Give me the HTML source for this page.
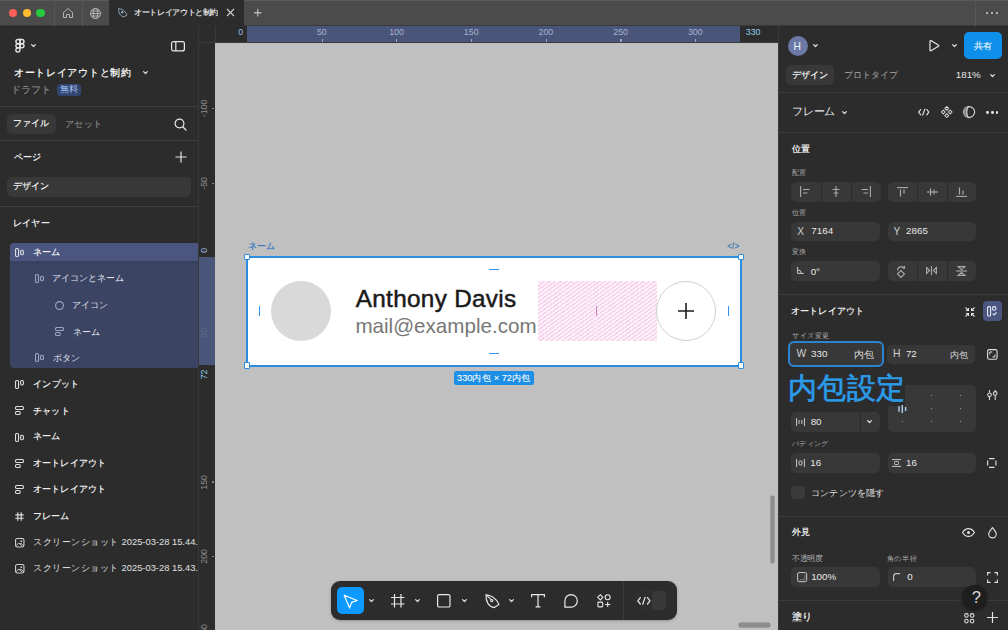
<!DOCTYPE html>
<html><head><meta charset="utf-8">
<style>
*{box-sizing:border-box;margin:0;padding:0}
html,body{width:1008px;height:630px;overflow:hidden;background:#2c2c2c;font-family:"Liberation Sans",sans-serif;color:#e8e8e8}
.a{position:absolute}
svg{position:absolute;overflow:visible}
.t{position:absolute;white-space:nowrap;line-height:1}
</style></head><body>
<div class="a" style="left:0px;top:0px;width:1008px;height:26px;background:#4b4b4b;"></div>
<div class="a" style="left:0px;top:0px;width:1008px;height:1px;background:#5a5a5a;"></div>
<div class="a" style="left:0px;top:25px;width:1008px;height:1px;background:#3a3a3a;"></div>
<div class="a" style="left:8.8px;top:8.8px;width:8.4px;height:8.4px;border-radius:50%;background:#fe5f57"></div>
<div class="a" style="left:22.5px;top:8.8px;width:8.4px;height:8.4px;border-radius:50%;background:#febc2e"></div>
<div class="a" style="left:36.199999999999996px;top:8.8px;width:8.4px;height:8.4px;border-radius:50%;background:#28c840"></div>
<div class="a" style="left:54px;top:0px;width:1px;height:26px;background:#575757;"></div>
<div class="a" style="left:82px;top:0px;width:1px;height:26px;background:#575757;"></div>
<div class="a" style="left:109px;top:0px;width:135px;height:26px;background:#2c2c2c;"></div>
<svg style="left:62px;top:7px" width="12" height="12" viewBox="0 0 12 12"><path d="M1.5 5.5L6 1.5l4.5 4V10.5H7.5V7.5h-3v3H1.5z" fill="none" stroke="#b8b8b8" stroke-width="0.95" stroke-linejoin="round"/></svg>
<svg style="left:89px;top:7px" width="13" height="13" viewBox="0 0 13 13"><g fill="none" stroke="#b8b8b8" stroke-width="0.95"><circle cx="6.5" cy="6.5" r="5"/><ellipse cx="6.5" cy="6.5" rx="2.2" ry="5"/><path d="M1.5 6.5h10M2.3 4h8.4M2.3 9h8.4"/></g></svg>
<svg style="left:118.3px;top:8.4px" width="9.6" height="9.6" viewBox="0 0 15 14.5"><g fill="none" stroke="#a9c3dc" stroke-width="1.2" stroke-linejoin="round"><path d="M1 0.7C5 0.9 11.5 3.8 14 10.5L9.3 13.6C4 12.8 0.6 8 1 0.7z"/><circle cx="6.6" cy="6.4" r="1.3" fill="#a9c3dc"/></g></svg>
<div class="t" style="left:133.51px;top:8.76px;font-size:40.00px;font-weight:bold;color:#e6e6e6;font-family:'Liberation Sans',sans-serif;;transform:scale(0.1872);transform-origin:0 0;">オートレイアウトと制約</div>
<svg style="left:226px;top:8px" width="9" height="9" viewBox="0 0 9 9"><path d="M1 1l7 7M8 1L1 8" stroke="#cfcfcf" stroke-width="1.1"/></svg>
<svg style="left:254px;top:9.2px" width="7.5" height="7.5" viewBox="0 0 7.5 7.5"><path d="M3.75 0v7.5M0 3.75h7.5" stroke="#b4b4b4" stroke-width="1.3"/></svg>
<div class="a" style="left:986px;top:12px;width:2.2px;height:2.2px;border-radius:50%;background:#d0d0d0"></div>
<div class="a" style="left:991px;top:12px;width:2.2px;height:2.2px;border-radius:50%;background:#d0d0d0"></div>
<div class="a" style="left:996px;top:12px;width:2.2px;height:2.2px;border-radius:50%;background:#d0d0d0"></div>
<div class="a" style="left:975px;top:0px;width:1px;height:26px;background:#575757;"></div>
<div class="a" style="left:0px;top:26px;width:198px;height:604px;background:#2c2c2c;"></div>
<div class="a" style="left:198px;top:26px;width:1px;height:604px;background:#383838;"></div>
<div class="a" style="left:0px;top:106px;width:198px;height:1px;background:#3d3d3d;"></div>
<div class="a" style="left:0px;top:140px;width:198px;height:1px;background:#3d3d3d;"></div>
<div class="a" style="left:0px;top:206px;width:198px;height:1px;background:#3d3d3d;"></div>
<svg style="left:0px;top:0px" width="40" height="60" viewBox="0 0 40 60"><g fill="none" stroke="#e8e8e8" stroke-width="1.35"><path d="M19.95 39.5H18a2.1 2.1 0 0 0 0 4.2h1.95z"/><path d="M19.95 39.5h1.95a2.1 2.1 0 0 1 0 4.2h-1.95z"/><path d="M19.95 43.7H18a2.1 2.1 0 0 0 0 4.2h1.95z"/><circle cx="21.9" cy="45.8" r="2.1"/><path d="M19.95 47.9V50a2.05 2.1 0 1 1-2.05-2.1z"/></g></svg>
<svg style="left:30.5px;top:44.0px" width="5" height="3" viewBox="0 0 5 3"><path d="M0.6 0.6l1.9 1.9 1.9-1.9" fill="none" stroke="#d8d8d8" stroke-width="1.3" stroke-linecap="round" stroke-linejoin="round"/></svg>
<svg style="left:171px;top:40.5px" width="14" height="10.5" viewBox="0 0 14 10.5"><rect x="0.6" y="0.6" width="12.8" height="9.3" rx="2" fill="none" stroke="#e8e8e8" stroke-width="1.2"/><path d="M4.8 0.8v9" stroke="#e8e8e8" stroke-width="1.2"/></svg>
<div class="t" style="left:14.04px;top:66.71px;font-size:40.00px;font-weight:bold;color:#f0f0f0;font-family:'Liberation Sans',sans-serif;;transform:scale(0.2622);transform-origin:0 0;">オートレイアウトと制約</div>
<svg style="left:143.3px;top:70.5px" width="5" height="3" viewBox="0 0 5 3"><path d="M0.6 0.6l1.9 1.9 1.9-1.9" fill="none" stroke="#d8d8d8" stroke-width="1.3" stroke-linecap="round" stroke-linejoin="round"/></svg>
<div class="t" style="left:10.87px;top:85.23px;font-size:40.00px;font-weight:normal;color:#9a9a9a;font-family:'Liberation Sans',sans-serif;;transform:scale(0.2450);transform-origin:0 0;">ドラフト</div>
<div class="a" style="left:56.5px;top:83.6px;width:24px;height:12px;background:#33456f;border-radius:3.5px"></div>
<div class="t" style="left:59.69px;top:85.46px;font-size:40.00px;font-weight:normal;color:#a3c2f5;font-family:'Liberation Sans',sans-serif;;transform:scale(0.2141);transform-origin:0 0;">無料</div>
<div class="a" style="left:7px;top:114px;width:49px;height:20px;background:#383838;border-radius:5px"></div>
<div class="t" style="left:12.94px;top:118.74px;font-size:40.00px;font-weight:bold;color:#eeeeee;font-family:'Liberation Sans',sans-serif;;transform:scale(0.2186);transform-origin:0 0;">ファイル</div>
<div class="t" style="left:65.08px;top:118.50px;font-size:40.00px;font-weight:normal;color:#9a9a9a;font-family:'Liberation Sans',sans-serif;;transform:scale(0.2293);transform-origin:0 0;">アセット</div>
<svg style="left:174px;top:117.5px" width="13" height="13" viewBox="0 0 13 13"><circle cx="5.5" cy="5.5" r="4.4" fill="none" stroke="#e8e8e8" stroke-width="1.2"/><path d="M8.7 8.7l3.3 3.3" stroke="#e8e8e8" stroke-width="1.3" stroke-linecap="round"/></svg>
<div class="t" style="left:13.60px;top:151.80px;font-size:40.00px;font-weight:bold;color:#eeeeee;font-family:'Liberation Sans',sans-serif;;transform:scale(0.2252);transform-origin:0 0;">ページ</div>
<svg style="left:175px;top:151px" width="12" height="12" viewBox="0 0 12 12"><path d="M6 0.5v11M0.5 6h11" stroke="#e8e8e8" stroke-width="1.2"/></svg>
<div class="a" style="left:6.5px;top:177px;width:184px;height:20px;background:#383838;border-radius:5px"></div>
<div class="t" style="left:13.38px;top:182.21px;font-size:40.00px;font-weight:bold;color:#eeeeee;font-family:'Liberation Sans',sans-serif;;transform:scale(0.2188);transform-origin:0 0;">デザイン</div>
<div class="t" style="left:13.18px;top:218.07px;font-size:40.00px;font-weight:bold;color:#eeeeee;font-family:'Liberation Sans',sans-serif;;transform:scale(0.2239);transform-origin:0 0;">レイヤー</div>
<div class="a" style="left:10px;top:243.4px;width:188px;height:124.4px;background:#3b4462;border-radius:4px 0 0 4px"></div>
<div class="a" style="left:10px;top:243.4px;width:188px;height:18px;background:#4a5680;border-radius:4px 0 0 0"></div>
<div class="a" style="left:10px;top:261.4px;width:188px;height:3px;background:#384160;"></div>
<svg style="left:15.2px;top:247.9px" width="9.5" height="9.5" viewBox="0 0 9.5 9.5"><rect x="0.55" y="0.55" width="3" height="7.9" rx="1.1" fill="none" stroke="#e0e0e0" stroke-width="1.1"/><rect x="5.6" y="2.3" width="2.8" height="4.4" rx="1.1" fill="none" stroke="#e0e0e0" stroke-width="1.1"/></svg>
<div class="t" style="left:33.28px;top:247.70px;font-size:40.00px;font-weight:bold;color:#f2f2f2;font-family:'Liberation Sans',sans-serif;;transform:scale(0.2161);transform-origin:0 0;">ネーム</div>
<svg style="left:35.0px;top:274.3px" width="9.5" height="9.5" viewBox="0 0 9.5 9.5"><rect x="0.55" y="0.55" width="3" height="7.9" rx="1.1" fill="none" stroke="#9ea6c2" stroke-width="1.1"/><rect x="5.6" y="2.3" width="2.8" height="4.4" rx="1.1" fill="none" stroke="#9ea6c2" stroke-width="1.1"/></svg>
<div class="t" style="left:52.42px;top:273.96px;font-size:40.00px;font-weight:normal;color:#e3e6f0;font-family:'Liberation Sans',sans-serif;;transform:scale(0.2201);transform-origin:0 0;">アイコンとネーム</div>
<svg style="left:54.8px;top:301.1px" width="9.5" height="9.5" viewBox="0 0 9.5 9.5"><circle cx="4.5" cy="4.5" r="3.9" fill="none" stroke="#9ea6c2" stroke-width="1.1"/></svg>
<div class="t" style="left:72.23px;top:300.82px;font-size:40.00px;font-weight:normal;color:#e3e6f0;font-family:'Liberation Sans',sans-serif;;transform:scale(0.2173);transform-origin:0 0;">アイコン</div>
<svg style="left:54.8px;top:327.1px" width="9.5" height="9.5" viewBox="0 0 9.5 9.5"><rect x="0.55" y="0.55" width="7.9" height="3" rx="1.1" fill="none" stroke="#9ea6c2" stroke-width="1.1"/><rect x="0.55" y="5.5" width="4.6" height="3" rx="1.1" fill="none" stroke="#9ea6c2" stroke-width="1.1"/></svg>
<div class="t" style="left:72.66px;top:326.73px;font-size:40.00px;font-weight:normal;color:#e3e6f0;font-family:'Liberation Sans',sans-serif;;transform:scale(0.2216);transform-origin:0 0;">ネーム</div>
<svg style="left:35.0px;top:353.0px" width="9.5" height="9.5" viewBox="0 0 9.5 9.5"><rect x="0.55" y="0.55" width="3" height="7.9" rx="1.1" fill="none" stroke="#9ea6c2" stroke-width="1.1"/><rect x="5.6" y="2.3" width="2.8" height="4.4" rx="1.1" fill="none" stroke="#9ea6c2" stroke-width="1.1"/></svg>
<div class="t" style="left:53.08px;top:352.71px;font-size:40.00px;font-weight:normal;color:#e3e6f0;font-family:'Liberation Sans',sans-serif;;transform:scale(0.2229);transform-origin:0 0;">ボタン</div>
<svg style="left:15.2px;top:379.5px" width="9.5" height="9.5" viewBox="0 0 9.5 9.5"><rect x="0.55" y="0.55" width="3" height="7.9" rx="1.1" fill="none" stroke="#e0e0e0" stroke-width="1.1"/><rect x="5.6" y="0.55" width="2.8" height="4.4" rx="1.1" fill="none" stroke="#e0e0e0" stroke-width="1.1"/></svg>
<div class="t" style="left:33.05px;top:379.46px;font-size:40.00px;font-weight:bold;color:#eeeeee;font-family:'Liberation Sans',sans-serif;;transform:scale(0.2268);transform-origin:0 0;">インプット</div>
<svg style="left:15.2px;top:406.0px" width="9.5" height="9.5" viewBox="0 0 9.5 9.5"><rect x="0.55" y="0.55" width="7.9" height="3" rx="1.1" fill="none" stroke="#e0e0e0" stroke-width="1.1"/><rect x="0.55" y="5.5" width="4.6" height="3" rx="1.1" fill="none" stroke="#e0e0e0" stroke-width="1.1"/></svg>
<div class="t" style="left:33.28px;top:405.57px;font-size:40.00px;font-weight:bold;color:#eeeeee;font-family:'Liberation Sans',sans-serif;;transform:scale(0.2240);transform-origin:0 0;">チャット</div>
<svg style="left:15.2px;top:432.5px" width="9.5" height="9.5" viewBox="0 0 9.5 9.5"><rect x="0.55" y="0.55" width="3" height="7.9" rx="1.1" fill="none" stroke="#e0e0e0" stroke-width="1.1"/><rect x="5.6" y="2.3" width="2.8" height="4.4" rx="1.1" fill="none" stroke="#e0e0e0" stroke-width="1.1"/></svg>
<div class="t" style="left:33.28px;top:432.25px;font-size:40.00px;font-weight:bold;color:#eeeeee;font-family:'Liberation Sans',sans-serif;;transform:scale(0.2161);transform-origin:0 0;">ネーム</div>
<svg style="left:15.2px;top:458.5px" width="9.5" height="9.5" viewBox="0 0 9.5 9.5"><rect x="0.55" y="0.55" width="7.9" height="3" rx="1.1" fill="none" stroke="#e0e0e0" stroke-width="1.1"/><rect x="0.55" y="5.5" width="4.6" height="3" rx="1.1" fill="none" stroke="#e0e0e0" stroke-width="1.1"/></svg>
<div class="t" style="left:33.28px;top:458.06px;font-size:40.00px;font-weight:bold;color:#eeeeee;font-family:'Liberation Sans',sans-serif;;transform:scale(0.2246);transform-origin:0 0;">オートレイアウト</div>
<svg style="left:15.2px;top:484.9px" width="9.5" height="9.5" viewBox="0 0 9.5 9.5"><rect x="0.55" y="0.55" width="7.9" height="3" rx="1.1" fill="none" stroke="#e0e0e0" stroke-width="1.1"/><rect x="0.55" y="5.5" width="4.6" height="3" rx="1.1" fill="none" stroke="#e0e0e0" stroke-width="1.1"/></svg>
<div class="t" style="left:33.28px;top:484.46px;font-size:40.00px;font-weight:bold;color:#eeeeee;font-family:'Liberation Sans',sans-serif;;transform:scale(0.2246);transform-origin:0 0;">オートレイアウト</div>
<svg style="left:15.2px;top:511.5px" width="9.5" height="9.5" viewBox="0 0 9.5 9.5"><path d="M2.8 0.3v8.4M6.2 0.3v8.4M0.3 2.8h8.4M0.3 6.2h8.4" stroke="#e0e0e0" stroke-width="1.15" fill="none"/></svg>
<div class="t" style="left:32.83px;top:511.10px;font-size:40.00px;font-weight:bold;color:#eeeeee;font-family:'Liberation Sans',sans-serif;;transform:scale(0.2229);transform-origin:0 0;">フレーム</div>
<svg style="left:15.2px;top:538.0px" width="9.5" height="9.5" viewBox="0 0 9.5 9.5"><rect x="0.55" y="0.55" width="8.4" height="8.4" rx="1.6" fill="none" stroke="#d0d0d0" stroke-width="1.1"/><path d="M0.9 7.8l2.9-2.9 3 3M5 6.2l1-1 2.8 2.8" fill="none" stroke="#d0d0d0" stroke-width="1"/><circle cx="6.3" cy="3.2" r="0.9" fill="#d0d0d0"/></svg>
<div class="t" style="left:32.80px;top:537.36px;font-size:40.00px;font-weight:normal;color:#e0e0e0;font-family:'Liberation Sans',sans-serif;;transform:scale(0.2336);transform-origin:0 0;">スクリーンショット 2025-03-28 15.44.</div>
<svg style="left:15.2px;top:564.0px" width="9.5" height="9.5" viewBox="0 0 9.5 9.5"><rect x="0.55" y="0.55" width="8.4" height="8.4" rx="1.6" fill="none" stroke="#d0d0d0" stroke-width="1.1"/><path d="M0.9 7.8l2.9-2.9 3 3M5 6.2l1-1 2.8 2.8" fill="none" stroke="#d0d0d0" stroke-width="1"/><circle cx="6.3" cy="3.2" r="0.9" fill="#d0d0d0"/></svg>
<div class="t" style="left:32.80px;top:563.36px;font-size:40.00px;font-weight:normal;color:#e0e0e0;font-family:'Liberation Sans',sans-serif;;transform:scale(0.2336);transform-origin:0 0;">スクリーンショット 2025-03-28 15.43.</div>
<div class="a" style="left:199px;top:26px;width:579px;height:17px;background:#2c2c2c;"></div>
<div class="a" style="left:199px;top:26px;width:16px;height:604px;background:#2c2c2c;"></div>
<div class="a" style="left:247.3px;top:26px;width:493px;height:16.5px;background:#4a5679;"></div>
<div class="a" style="left:199px;top:257px;width:16px;height:108px;background:#4a5679;"></div>
<div class="a" style="left:321.5px;top:38.9px;width:1.3px;height:3.2px;background:#9aa6c4;"></div>
<div class="t" style="left:301.80px;top:27.50px;width:40px;height:8.8px;text-align:center;font-size:8.8px;color:#a7b2cf">50</div>
<div class="a" style="left:396.2px;top:38.9px;width:1.3px;height:3.2px;background:#9aa6c4;"></div>
<div class="t" style="left:376.50px;top:27.50px;width:40px;height:8.8px;text-align:center;font-size:8.8px;color:#a7b2cf">100</div>
<div class="a" style="left:470.9px;top:38.9px;width:1.3px;height:3.2px;background:#9aa6c4;"></div>
<div class="t" style="left:451.20px;top:27.50px;width:40px;height:8.8px;text-align:center;font-size:8.8px;color:#a7b2cf">150</div>
<div class="a" style="left:545.6px;top:38.9px;width:1.3px;height:3.2px;background:#9aa6c4;"></div>
<div class="t" style="left:525.90px;top:27.50px;width:40px;height:8.8px;text-align:center;font-size:8.8px;color:#a7b2cf">200</div>
<div class="a" style="left:620.3px;top:38.9px;width:1.3px;height:3.2px;background:#9aa6c4;"></div>
<div class="t" style="left:600.60px;top:27.50px;width:40px;height:8.8px;text-align:center;font-size:8.8px;color:#a7b2cf">250</div>
<div class="a" style="left:695.0px;top:38.9px;width:1.3px;height:3.2px;background:#9aa6c4;"></div>
<div class="t" style="left:675.30px;top:27.50px;width:40px;height:8.8px;text-align:center;font-size:8.8px;color:#a7b2cf">300</div>
<div class="t" style="left:220.60px;top:27.50px;width:40px;height:8.8px;text-align:center;font-size:8.8px;color:#9bbbe6">0</div>
<div class="t" style="left:733.10px;top:27.50px;width:40px;height:8.8px;text-align:center;font-size:8.8px;color:#8fd0ec">330</div>
<div class="a" style="left:199px;top:42px;width:579px;height:1px;background:#3a3a3a;"></div>
<div class="a" style="left:214.5px;top:26px;width:1px;height:17px;background:#3a3a3a;"></div>
<div class="a" style="left:211.5px;top:107.8px;width:2.5px;height:1.3px;background:#8a8a8a;"></div>
<div class="t" style="left:189.20px;top:104.00px;width:30px;height:8.8px;text-align:center;font-size:8.8px;color:#8f8f8f;transform:rotate(-90deg)">-100</div>
<div class="a" style="left:211.5px;top:182.5px;width:2.5px;height:1.3px;background:#8a8a8a;"></div>
<div class="t" style="left:189.20px;top:178.70px;width:30px;height:8.8px;text-align:center;font-size:8.8px;color:#8f8f8f;transform:rotate(-90deg)">-50</div>
<div class="a" style="left:211.5px;top:481.3px;width:2.5px;height:1.3px;background:#8a8a8a;"></div>
<div class="t" style="left:189.20px;top:477.50px;width:30px;height:8.8px;text-align:center;font-size:8.8px;color:#8f8f8f;transform:rotate(-90deg)">150</div>
<div class="a" style="left:211.5px;top:556.0px;width:2.5px;height:1.3px;background:#8a8a8a;"></div>
<div class="t" style="left:189.20px;top:552.20px;width:30px;height:8.8px;text-align:center;font-size:8.8px;color:#8f8f8f;transform:rotate(-90deg)">200</div>
<div class="a" style="left:211.5px;top:630.7px;width:2.5px;height:1.3px;background:#8a8a8a;"></div>
<div class="t" style="left:189.20px;top:626.90px;width:30px;height:8.8px;text-align:center;font-size:8.8px;color:#8f8f8f;transform:rotate(-90deg)">250</div>
<div class="t" style="left:189.20px;top:246.10px;width:30px;height:8.8px;text-align:center;font-size:8.8px;color:#9bbbe6;transform:rotate(-90deg)">0</div>
<div class="t" style="left:189.20px;top:370.00px;width:30px;height:8.8px;text-align:center;font-size:8.8px;color:#8fd0ec;transform:rotate(-90deg)">72</div>
<div class="t" style="left:189.20px;top:328.10px;width:30px;height:8.8px;text-align:center;font-size:8.8px;color:#5d6a8a;transform:rotate(-90deg)">50</div>
<div class="a" style="left:215px;top:43px;width:563px;height:587px;background:#c0c0c0;"></div>
<div class="a" style="left:248px;top:258px;width:492px;height:107px;background:#ffffff;"></div>
<div class="a" style="left:271.4px;top:281px;width:60px;height:60px;border-radius:50%;background:#d9d9d9"></div>
<div class="t" style="left:355.80px;top:286.83px;font-size:24.30px;font-weight:normal;color:#1a1a1a;font-family:'Liberation Sans',sans-serif;letter-spacing:0.0125em;-webkit-text-stroke:0.5px #1a1a1a">Anthony Davis</div>
<div class="t" style="left:355.43px;top:316.26px;font-size:20.60px;font-weight:normal;color:#777777;font-family:'Liberation Sans',sans-serif;">mail@example.com</div>
<div class="a" style="left:537.5px;top:281.4px;width:119px;height:59.3px;background:repeating-linear-gradient(144deg,rgba(236,165,215,0.4) 0 1.5px,rgba(255,255,255,0) 1.5px 3.25px),#fdf1fa"></div>
<div class="a" style="left:596px;top:306.3px;width:1.3px;height:9.5px;background:#d27cc0;"></div>
<div class="a" style="left:656.3px;top:281.4px;width:60px;height:60px;border-radius:50%;background:#fff;border:1px solid #d0d0d0"></div>
<svg style="left:677px;top:302px" width="18" height="18" viewBox="0 0 18 18"><path d="M9 1v16M1 9h16" stroke="#1e1e1e" stroke-width="1.6"/></svg>
<div class="a" style="left:259.3px;top:306px;width:1px;height:10px;background:#2e90e6;"></div>
<div class="a" style="left:728px;top:306px;width:1px;height:10px;background:#2e90e6;"></div>
<div class="a" style="left:489px;top:268.6px;width:10px;height:1px;background:#2e90e6;"></div>
<div class="a" style="left:489px;top:352.6px;width:10px;height:1px;background:#2e90e6;"></div>
<div class="a" style="left:246px;top:256px;width:496px;height:110.5px;border:2px solid #2a8de0"></div>
<div class="a" style="left:243.7px;top:253.7px;width:6.6px;height:6.6px;background:#fff;border:1px solid #2a8de0;border-radius:1px"></div>
<div class="a" style="left:737.7px;top:253.7px;width:6.6px;height:6.6px;background:#fff;border:1px solid #2a8de0;border-radius:1px"></div>
<div class="a" style="left:243.7px;top:362.0px;width:6.6px;height:6.6px;background:#fff;border:1px solid #2a8de0;border-radius:1px"></div>
<div class="a" style="left:737.7px;top:362.0px;width:6.6px;height:6.6px;background:#fff;border:1px solid #2a8de0;border-radius:1px"></div>
<div class="t" style="left:247.88px;top:240.82px;font-size:40.00px;font-weight:bold;color:#3b7cc4;font-family:'Liberation Sans',sans-serif;;transform:scale(0.2220);transform-origin:0 0;">ネーム</div>
<div class="t" style="left:727.32px;top:243.48px;font-size:8.21px;font-weight:bold;color:#4a7fb0;font-family:'Liberation Sans',sans-serif;">&lt;/&gt;</div>
<div class="a" style="left:453.9px;top:371.2px;width:80px;height:13.6px;background:#1d8fe6;border-radius:2.5px"></div>
<div class="t" style="left:456.94px;top:373.41px;font-size:40.00px;font-weight:normal;color:#ffffff;font-family:'Liberation Sans',sans-serif;-webkit-text-stroke:0.25px #fff;transform:scale(0.2322);transform-origin:0 0;">330内包 × 72内包</div>
<div class="a" style="left:770.7px;top:495.5px;width:3.6px;height:67.4px;background:#8e8e8e;border-radius:2px;box-shadow:0 0 0 0.5px #7a7a7a"></div>
<div class="a" style="left:738.6px;top:623px;width:31px;height:3.6px;background:#8e8e8e;border-radius:2px;box-shadow:0 0 0 0.5px #7a7a7a"></div>
<div class="a" style="left:331px;top:580.7px;width:346px;height:39px;background:#2c2c2c;border-radius:9px;box-shadow:0 1px 3px rgba(0,0,0,0.25)"></div>
<div class="a" style="left:337.3px;top:587.1px;width:26.8px;height:26.6px;background:#0d99ff;border-radius:5px"></div>
<svg style="left:343px;top:593.5px" width="16" height="15" viewBox="0 0 16 15"><path d="M1.2 1.2l13 5.3-5.6 1.9-2 5.6z" fill="none" stroke="#fff" stroke-width="1.2" stroke-linejoin="round"/></svg>
<svg style="left:368.75px;top:599.4px" width="5" height="3" viewBox="0 0 5 3"><path d="M0.6 0.6l1.9 1.9 1.9-1.9" fill="none" stroke="#d8d8d8" stroke-width="1.3" stroke-linecap="round" stroke-linejoin="round"/></svg>
<svg style="left:415.4px;top:599.4px" width="5" height="3" viewBox="0 0 5 3"><path d="M0.6 0.6l1.9 1.9 1.9-1.9" fill="none" stroke="#d8d8d8" stroke-width="1.3" stroke-linecap="round" stroke-linejoin="round"/></svg>
<svg style="left:462.1px;top:599.4px" width="5" height="3" viewBox="0 0 5 3"><path d="M0.6 0.6l1.9 1.9 1.9-1.9" fill="none" stroke="#d8d8d8" stroke-width="1.3" stroke-linecap="round" stroke-linejoin="round"/></svg>
<svg style="left:509.2px;top:599.4px" width="5" height="3" viewBox="0 0 5 3"><path d="M0.6 0.6l1.9 1.9 1.9-1.9" fill="none" stroke="#d8d8d8" stroke-width="1.3" stroke-linecap="round" stroke-linejoin="round"/></svg>
<svg style="left:391px;top:593.7px" width="13.5" height="13.5" viewBox="0 0 13.5 13.5"><path d="M3.5 0v13.5M10 0v13.5M0 3.5h13.5M0 10h13.5" stroke="#e8e8e8" stroke-width="1.2" fill="none"/></svg>
<svg style="left:437.3px;top:594px" width="13.6" height="13.6" viewBox="0 0 13.6 13.6"><rect x="0.6" y="0.6" width="12.4" height="12.4" rx="1.6" fill="none" stroke="#e8e8e8" stroke-width="1.2"/></svg>
<svg style="left:484.6px;top:593.8px" width="14.6" height="14.2" viewBox="0 0 14.6 14.2"><g fill="none" stroke="#e8e8e8" stroke-width="1.15" stroke-linejoin="round"><path d="M1 0.7C5 0.9 11.5 3.8 14 10.5L9.3 13.6C4 12.8 0.6 8 1 0.7z"/><circle cx="6.8" cy="6.6" r="1.1"/><path d="M1.2 0.9l4.8 4.8"/></g></svg>
<svg style="left:531px;top:594px" width="14" height="13.5" viewBox="0 0 14 13.5"><path d="M0.6 3.2V0.6h12.8v2.6M7 0.6v12.3M4.6 12.9h4.8" fill="none" stroke="#e8e8e8" stroke-width="1.2"/></svg>
<svg style="left:564px;top:594px" width="14" height="13.5" viewBox="0 0 14 13.5"><path d="M7 0.6a6.3 6.3 0 1 1 0 12.6H0.9V7A6.2 6.2 0 0 1 7 0.6z" fill="none" stroke="#e8e8e8" stroke-width="1.2" stroke-linejoin="round"/></svg>
<svg style="left:596.7px;top:594px" width="14.2" height="13.6" viewBox="0 0 14.2 13.6"><g fill="none" stroke="#e8e8e8" stroke-width="1.1"><path d="M3.3 0.7l2.6 2.6-2.6 2.6L0.7 3.3z"/><circle cx="10.7" cy="3.3" r="2.5"/><rect x="0.9" y="8.1" width="4.8" height="4.8" rx="0.9"/><path d="M10.7 7.9v5.2M8.1 10.5h5.2"/></g></svg>
<div class="a" style="left:623.4px;top:581px;width:1px;height:39px;background:#3a3a3a;"></div>
<div class="a" style="left:636.3px;top:590.7px;width:30.1px;height:19.6px;background:#2d2d2d;border-radius:5px;box-shadow:0 0 0 0.5px #343434"></div>
<div class="a" style="left:652px;top:591px;width:14.4px;height:19px;background:#393939;border-radius:4px"></div>
<svg style="left:637.2px;top:596.6px" width="13.8" height="7.6" viewBox="0 0 13.8 7.6"><path d="M3.3 0.6L0.8 3.8l2.5 3.2M10.5 0.6l2.5 3.2-2.5 3.2M8.1 0.4L5.7 7.2" fill="none" stroke="#e6e6e6" stroke-width="1.25" stroke-linecap="round" stroke-linejoin="round"/></svg>
<div class="a" style="left:778px;top:26px;width:230px;height:604px;background:#2c2c2c;"></div>
<div class="a" style="left:778px;top:26px;width:1px;height:604px;background:#383838;"></div>
<div class="a" style="left:779px;top:91.5px;width:229px;height:1px;background:#3a3a3a;"></div>
<div class="a" style="left:779px;top:132px;width:229px;height:1px;background:#3a3a3a;"></div>
<div class="a" style="left:779px;top:294px;width:229px;height:1px;background:#3a3a3a;"></div>
<div class="a" style="left:779px;top:515.5px;width:229px;height:1px;background:#3a3a3a;"></div>
<div class="a" style="left:779px;top:600px;width:229px;height:1px;background:#3a3a3a;"></div>
<div class="a" style="left:787.6px;top:35.8px;width:20px;height:20px;border-radius:50%;background:#6a79a6"></div>
<div class="t" style="left:793.54px;top:42.34px;font-size:10.30px;font-weight:normal;color:#f4f4f8;font-family:'Liberation Sans',sans-serif;">H</div>
<svg style="left:812.5px;top:44.3px" width="5" height="3" viewBox="0 0 5 3"><path d="M0.6 0.6l1.9 1.9 1.9-1.9" fill="none" stroke="#d8d8d8" stroke-width="1.3" stroke-linecap="round" stroke-linejoin="round"/></svg>
<svg style="left:929px;top:40px" width="11.5" height="11.5" viewBox="0 0 11.5 11.5"><path d="M1 1.2v9.1c0 .5.5.8.9.5l7.6-4.6c.4-.2.4-.8 0-1L1.9 .6C1.5.4 1 .7 1 1.2z" fill="none" stroke="#e8e8e8" stroke-width="1.2" stroke-linejoin="round"/></svg>
<svg style="left:951.5px;top:44.3px" width="5" height="3" viewBox="0 0 5 3"><path d="M0.6 0.6l1.9 1.9 1.9-1.9" fill="none" stroke="#d8d8d8" stroke-width="1.3" stroke-linecap="round" stroke-linejoin="round"/></svg>
<div class="a" style="left:964.4px;top:32.4px;width:37.2px;height:26.2px;background:#0e90ea;border-radius:5px"></div>
<div class="t" style="left:974.49px;top:41.74px;font-size:40.00px;font-weight:normal;color:#ffffff;font-family:'Liberation Sans',sans-serif;-webkit-text-stroke:0.2px #fff;transform:scale(0.2128);transform-origin:0 0;">共有</div>
<div class="a" style="left:786px;top:65.2px;width:48px;height:19.7px;background:#383838;border-radius:5px"></div>
<div class="t" style="left:791.78px;top:70.81px;font-size:40.00px;font-weight:bold;color:#eeeeee;font-family:'Liberation Sans',sans-serif;;transform:scale(0.2188);transform-origin:0 0;">デザイン</div>
<div class="t" style="left:843.94px;top:71.02px;font-size:40.00px;font-weight:normal;color:#a8a8a8;font-family:'Liberation Sans',sans-serif;;transform:scale(0.2189);transform-origin:0 0;">プロトタイプ</div>
<div class="t" style="left:955.75px;top:70.18px;font-size:9.80px;font-weight:normal;color:#e6e6e6;font-family:'Liberation Sans',sans-serif;">181%</div>
<svg style="left:990.0px;top:74.0px" width="5" height="3" viewBox="0 0 5 3"><path d="M0.6 0.6l1.9 1.9 1.9-1.9" fill="none" stroke="#d8d8d8" stroke-width="1.3" stroke-linecap="round" stroke-linejoin="round"/></svg>
<div class="t" style="left:791.74px;top:105.82px;font-size:40.00px;font-weight:normal;color:#eeeeee;font-family:'Liberation Sans',sans-serif;;transform:scale(0.2652);transform-origin:0 0;">フレーム</div>
<svg style="left:841.5px;top:110.9px" width="5" height="3" viewBox="0 0 5 3"><path d="M0.6 0.6l1.9 1.9 1.9-1.9" fill="none" stroke="#d8d8d8" stroke-width="1.3" stroke-linecap="round" stroke-linejoin="round"/></svg>
<svg style="left:917.5px;top:109.3px" width="11.5" height="6.4" viewBox="0 0 11.5 6.4"><path d="M2.7 0.5L0.7 3.2l2 2.7M8.8 0.5l2 2.7-2 2.7M6.8 0.3L4.7 6.1" fill="none" stroke="#dcdcdc" stroke-width="1.2" stroke-linecap="round" stroke-linejoin="round"/></svg>
<svg style="left:940.5px;top:106px" width="11.5" height="12" viewBox="0 0 11.5 12"><g fill="none" stroke="#dcdcdc" stroke-width="1.05" stroke-linejoin="round"><path d="M5.75 0.5l1.9 1.9-1.9 1.9-1.9-1.9z"/><path d="M5.75 7.7l1.9 1.9-1.9 1.9-1.9-1.9z"/><path d="M2.3 4.1l1.9 1.9-1.9 1.9L0.4 6z"/><path d="M9.2 4.1l1.9 1.9-1.9 1.9-1.9-1.9z"/></g></svg>
<svg style="left:963px;top:106.2px" width="12.2" height="12.2" viewBox="0 0 12.2 12.2"><circle cx="6.1" cy="6.1" r="5.5" fill="none" stroke="#dcdcdc" stroke-width="1.1"/><path d="M6.1 0.6A5.5 5.5 0 0 0 6.1 11.6A2.2 5.5 0 0 1 6.1 0.6z" fill="#8a8a8a"/><path d="M6.1 0.6A2.2 5.5 0 0 0 6.1 11.6" fill="none" stroke="#dcdcdc" stroke-width="1"/></svg>
<div class="a" style="left:985.9px;top:110.9px;width:2.8px;height:2.8px;border-radius:50%;background:#e6e6e6"></div>
<div class="a" style="left:990.8000000000001px;top:110.9px;width:2.8px;height:2.8px;border-radius:50%;background:#e6e6e6"></div>
<div class="a" style="left:995.7px;top:110.9px;width:2.8px;height:2.8px;border-radius:50%;background:#e6e6e6"></div>
<div class="t" style="left:791.92px;top:144.89px;font-size:40.00px;font-weight:bold;color:#eeeeee;font-family:'Liberation Sans',sans-serif;;transform:scale(0.2200);transform-origin:0 0;">位置</div>
<div class="t" style="left:791.53px;top:168.67px;font-size:40.00px;font-weight:normal;color:#ababab;font-family:'Liberation Sans',sans-serif;;transform:scale(0.1870);transform-origin:0 0;">配置</div>
<div class="a" style="left:791.2px;top:182.1px;width:89.89999999999998px;height:19.700000000000017px;background:#383838;border-radius:5px"></div>
<div class="a" style="left:820.7px;top:182.1px;width:1px;height:19.700000000000017px;background:#2c2c2c;"></div>
<div class="a" style="left:851px;top:182.1px;width:1px;height:19.700000000000017px;background:#2c2c2c;"></div>
<div class="a" style="left:887.5px;top:182.1px;width:88.10000000000002px;height:19.700000000000017px;background:#383838;border-radius:5px"></div>
<div class="a" style="left:916.5px;top:182.1px;width:1px;height:19.700000000000017px;background:#2c2c2c;"></div>
<div class="a" style="left:946.8px;top:182.1px;width:1px;height:19.700000000000017px;background:#2c2c2c;"></div>
<svg style="left:800px;top:186px" width="10" height="11" viewBox="0 0 10 11"><path d="M0.6 0v11" stroke="#aaaaaa" stroke-width="1.1"/><path d="M3 3.5h6.5M3 7h4.5" stroke="#aaaaaa" stroke-width="1.2"/></svg>
<svg style="left:830.5px;top:186px" width="10" height="11" viewBox="0 0 10 11"><path d="M5 0v11" stroke="#aaaaaa" stroke-width="1.1"/><path d="M1.5 3.5h7M2.5 7h5" stroke="#aaaaaa" stroke-width="1.2"/></svg>
<svg style="left:860.5px;top:186px" width="10" height="11" viewBox="0 0 10 11"><path d="M9.4 0v11" stroke="#aaaaaa" stroke-width="1.1"/><path d="M0.5 3.5h6.5M2.5 7h4.5" stroke="#aaaaaa" stroke-width="1.2"/></svg>
<svg style="left:896.5px;top:186.5px" width="11" height="10" viewBox="0 0 11 10"><path d="M0 0.6h11" stroke="#aaaaaa" stroke-width="1.1"/><path d="M3.5 2.5v7M7 2.5v4" stroke="#aaaaaa" stroke-width="1.2"/></svg>
<svg style="left:926.5px;top:186.5px" width="11" height="10" viewBox="0 0 11 10"><path d="M0 5h11" stroke="#aaaaaa" stroke-width="1.1"/><path d="M3.5 1.5v7M7 2.5v5" stroke="#aaaaaa" stroke-width="1.2"/></svg>
<svg style="left:956px;top:186.5px" width="11" height="10" viewBox="0 0 11 10"><path d="M0 9.4h11" stroke="#aaaaaa" stroke-width="1.1"/><path d="M3.5 0.5v7M7 3.5v4" stroke="#aaaaaa" stroke-width="1.2"/></svg>
<div class="t" style="left:791.70px;top:208.89px;font-size:40.00px;font-weight:normal;color:#ababab;font-family:'Liberation Sans',sans-serif;;transform:scale(0.1810);transform-origin:0 0;">位置</div>
<div class="a" style="left:791.2px;top:221.6px;width:88.8px;height:19.4px;background:#383838;border-radius:5px"></div>
<div class="a" style="left:887.5px;top:221.6px;width:88.1px;height:19.4px;background:#383838;border-radius:5px"></div>
<div class="t" style="left:797.25px;top:226.78px;font-size:10.21px;font-weight:normal;color:#cfcfcf;font-family:'Liberation Sans',sans-serif;">X</div>
<div class="t" style="left:811.31px;top:225.98px;font-size:9.80px;font-weight:normal;color:#e8e8e8;font-family:'Liberation Sans',sans-serif;">7164</div>
<div class="t" style="left:893.42px;top:226.78px;font-size:10.21px;font-weight:normal;color:#cfcfcf;font-family:'Liberation Sans',sans-serif;">Y</div>
<div class="t" style="left:906.11px;top:225.98px;font-size:9.80px;font-weight:normal;color:#e8e8e8;font-family:'Liberation Sans',sans-serif;">2865</div>
<div class="t" style="left:791.51px;top:248.44px;font-size:40.00px;font-weight:normal;color:#ababab;font-family:'Liberation Sans',sans-serif;;transform:scale(0.1857);transform-origin:0 0;">変換</div>
<div class="a" style="left:791.2px;top:261px;width:88.8px;height:20px;background:#383838;border-radius:5px"></div>
<svg style="left:796.5px;top:266.5px" width="7" height="7" viewBox="0 0 7 7"><path d="M0.6 0v6.4h6.2M0.6 2.8a3.6 3.6 0 0 1 3.6 3.6" fill="none" stroke="#c8c8c8" stroke-width="1"/></svg>
<div class="t" style="left:810.67px;top:266.68px;font-size:9.80px;font-weight:normal;color:#e8e8e8;font-family:'Liberation Sans',sans-serif;">0°</div>
<div class="a" style="left:887.5px;top:261px;width:88.10000000000002px;height:20px;background:#383838;border-radius:5px"></div>
<div class="a" style="left:916.5px;top:261px;width:1px;height:20px;background:#2c2c2c;"></div>
<div class="a" style="left:946.8px;top:261px;width:1px;height:20px;background:#2c2c2c;"></div>
<svg style="left:896px;top:264.5px" width="10" height="13" viewBox="0 0 10 13"><g fill="none" stroke="#aaaaaa" stroke-width="1.1"><path d="M5 5.5l3.5 3.5L5 12.5 1.5 9z"/><path d="M1.5 5.5a4 4 0 0 1 7-2.5M8.5 1v2.3H6.3"/></g></svg>
<svg style="left:926px;top:266px" width="11" height="9" viewBox="0 0 11 9"><g fill="none" stroke="#aaaaaa" stroke-width="1.1"><path d="M5.5 0v9"/><path d="M0.6 1.5l3 3-3 3z"/><path d="M10.4 1.5l-3 3 3 3z"/></g></svg>
<svg style="left:956px;top:265.5px" width="11" height="10" viewBox="0 0 11 10"><g fill="none" stroke="#aaaaaa" stroke-width="1.1"><path d="M0 5h11"/><path d="M2 0.6h7l-3.5 3z"/><path d="M2 9.4h7l-3.5-3z"/></g></svg>
<div class="t" style="left:791.48px;top:306.26px;font-size:40.00px;font-weight:bold;color:#eeeeee;font-family:'Liberation Sans',sans-serif;;transform:scale(0.2246);transform-origin:0 0;">オートレイアウト</div>
<svg style="left:964.5px;top:306.5px" width="10" height="10" viewBox="0 0 10 10"><g fill="none" stroke="#e0e0e0" stroke-width="1.1"><path d="M0.5 0.5l3 3M3.5 1v2.5H1M9.5 0.5l-3 3M6.5 1v2.5H9M0.5 9.5l3-3M3.5 9V6.5H1M9.5 9.5l-3-3M6.5 9V6.5H9"/></g></svg>
<div class="a" style="left:982.7px;top:301.4px;width:19.3px;height:19.6px;background:#4a5680;border-radius:4px"></div>
<svg style="left:987px;top:305.5px" width="11" height="11" viewBox="0 0 11 11"><g fill="none" stroke="#e8ecf8" stroke-width="1.1"><rect x="0.6" y="0.6" width="3" height="9.4" rx="1.1"/><rect x="5.6" y="0.6" width="3.2" height="3.6" rx="1.1"/><path d="M5.8 7.6l1.3 1.3 2.6-2.6"/></g></svg>
<div class="t" style="left:791.93px;top:331.89px;font-size:40.00px;font-weight:normal;color:#ababab;font-family:'Liberation Sans',sans-serif;;transform:scale(0.1854);transform-origin:0 0;">サイズ変更</div>
<div class="a" style="left:787.6px;top:341px;width:96.6px;height:26.3px;border:2px solid #2a84d2;border-radius:6px;background:#383838"></div>
<div class="t" style="left:796.60px;top:348.84px;font-size:10.32px;font-weight:normal;color:#d0d0d0;font-family:'Liberation Sans',sans-serif;">W</div>
<div class="t" style="left:811.07px;top:348.78px;font-size:9.80px;font-weight:normal;color:#e8e8e8;font-family:'Liberation Sans',sans-serif;">330</div>
<div class="t" style="left:853.67px;top:349.63px;font-size:40.00px;font-weight:normal;color:#d8d8d8;font-family:'Liberation Sans',sans-serif;;transform:scale(0.2434);transform-origin:0 0;">内包</div>
<div class="a" style="left:887px;top:344.8px;width:88.3px;height:19.4px;background:#383838;border-radius:5px"></div>
<div class="t" style="left:893.05px;top:348.84px;font-size:10.32px;font-weight:normal;color:#d0d0d0;font-family:'Liberation Sans',sans-serif;">H</div>
<div class="t" style="left:905.91px;top:348.86px;font-size:9.80px;font-weight:normal;color:#e8e8e8;font-family:'Liberation Sans',sans-serif;">72</div>
<div class="t" style="left:949.89px;top:349.79px;font-size:40.00px;font-weight:normal;color:#d8d8d8;font-family:'Liberation Sans',sans-serif;;transform:scale(0.2355);transform-origin:0 0;">内包</div>
<svg style="left:986.8px;top:348.9px" width="10.7" height="10.9" viewBox="0 0 10.7 10.9"><rect x="0.6" y="0.6" width="9.5" height="9.7" rx="1.8" fill="none" stroke="#e0e0e0" stroke-width="1.1"/><path d="M2.8 5.5V3h2.5M7.9 5.5V8H5.4" fill="none" stroke="#e0e0e0" stroke-width="1"/></svg>
<div class="a" style="left:887.5px;top:384.8px;width:88.1px;height:46.8px;background:#383838;border-radius:5px"></div>
<div class="a" style="left:901.6999999999999px;top:395.0px;width:1.3px;height:1.3px;background:#9a9a9a;"></div>
<div class="a" style="left:901.6999999999999px;top:420.7px;width:1.3px;height:1.3px;background:#9a9a9a;"></div>
<div class="a" style="left:930.6999999999999px;top:395.0px;width:1.3px;height:1.3px;background:#9a9a9a;"></div>
<div class="a" style="left:930.6999999999999px;top:407.7px;width:1.3px;height:1.3px;background:#9a9a9a;"></div>
<div class="a" style="left:930.6999999999999px;top:420.7px;width:1.3px;height:1.3px;background:#9a9a9a;"></div>
<div class="a" style="left:959.9px;top:395.0px;width:1.3px;height:1.3px;background:#9a9a9a;"></div>
<div class="a" style="left:959.9px;top:407.7px;width:1.3px;height:1.3px;background:#9a9a9a;"></div>
<div class="a" style="left:959.9px;top:420.7px;width:1.3px;height:1.3px;background:#9a9a9a;"></div>
<svg style="left:986.8px;top:390.4px" width="10.7" height="10" viewBox="0 0 10.7 10"><g fill="none" stroke="#e0e0e0" stroke-width="1.05"><path d="M2.5 0v2.6M2.5 7v3M8.2 0v1.2M8.2 5.6v4.4"/><circle cx="2.5" cy="4.8" r="1.8"/><circle cx="8.2" cy="3.4" r="1.8"/></g></svg>
<div class="a" style="left:786px;top:368.8px;width:119.3px;height:36.8px;background:#2c2c2c;"></div>
<div class="t" style="left:787.79px;top:373.19px;font-size:40.00px;font-weight:normal;color:#2b9ae8;font-family:'Liberation Sans',sans-serif;-webkit-text-stroke:0.9px #2b9ae8;transform:scale(0.7364);transform-origin:0 0;">内包設定</div>
<svg style="left:898px;top:404.7px" width="9" height="8" viewBox="0 0 9 8"><path d="M1 1.3v5.4M4.3 0v8M7.6 2v4" stroke="#b4d4f4" stroke-width="1.4"/></svg>
<div class="a" style="left:791.2px;top:412.2px;width:88.8px;height:19.4px;background:#383838;border-radius:5px"></div>
<div class="a" style="left:860.3px;top:412.2px;width:1px;height:19.4px;background:#2c2c2c;"></div>
<svg style="left:796px;top:417.5px" width="9" height="8" viewBox="0 0 9 8"><path d="M0.6 0v8M8.4 0v8M3 2v4M5.8 2v4" fill="none" stroke="#c8c8c8" stroke-width="1"/></svg>
<div class="t" style="left:810.67px;top:416.98px;font-size:9.80px;font-weight:normal;color:#e8e8e8;font-family:'Liberation Sans',sans-serif;">80</div>
<svg style="left:867.2px;top:420.3px" width="5" height="3" viewBox="0 0 5 3"><path d="M0.6 0.6l1.9 1.9 1.9-1.9" fill="none" stroke="#d8d8d8" stroke-width="1.3" stroke-linecap="round" stroke-linejoin="round"/></svg>
<div class="t" style="left:792.30px;top:440.26px;font-size:40.00px;font-weight:normal;color:#ababab;font-family:'Liberation Sans',sans-serif;;transform:scale(0.1780);transform-origin:0 0;">パディング</div>
<div class="a" style="left:791.2px;top:453.3px;width:88.8px;height:19.4px;background:#383838;border-radius:5px"></div>
<div class="a" style="left:887.5px;top:453.3px;width:88.1px;height:19.4px;background:#383838;border-radius:5px"></div>
<svg style="left:796.3px;top:459px" width="9" height="8" viewBox="0 0 9 8"><g fill="none" stroke="#c8c8c8" stroke-width="1"><path d="M0.6 0v8M8.4 0v8"/><rect x="3" y="2" width="3" height="4" rx="0.8"/></g></svg>
<div class="t" style="left:810.35px;top:458.38px;font-size:9.80px;font-weight:normal;color:#e8e8e8;font-family:'Liberation Sans',sans-serif;">16</div>
<svg style="left:892px;top:459px" width="9" height="8" viewBox="0 0 9 8"><g fill="none" stroke="#c8c8c8" stroke-width="1"><path d="M0 0.6h9M0 7.4h9"/><rect x="2.5" y="2.5" width="4" height="3" rx="0.8"/></g></svg>
<div class="t" style="left:905.95px;top:458.38px;font-size:9.80px;font-weight:normal;color:#e8e8e8;font-family:'Liberation Sans',sans-serif;">16</div>
<svg style="left:987.4px;top:458px" width="9.5" height="10" viewBox="0 0 9.5 10"><g fill="none" stroke="#e0e0e0" stroke-width="1.1"><path d="M2 0.6h5.5M2 9.4h5.5M0.6 2.5v5M8.9 2.5v5"/></g></svg>
<div class="a" style="left:791px;top:485.9px;width:14px;height:13px;background:#3a3a3a;border-radius:3px"></div>
<div class="t" style="left:810.86px;top:487.70px;font-size:40.00px;font-weight:normal;color:#e0e0e0;font-family:'Liberation Sans',sans-serif;;transform:scale(0.2239);transform-origin:0 0;">コンテンツを隠す</div>
<div class="t" style="left:791.92px;top:528.24px;font-size:40.00px;font-weight:bold;color:#eeeeee;font-family:'Liberation Sans',sans-serif;;transform:scale(0.2200);transform-origin:0 0;">外見</div>
<svg style="left:962px;top:528px" width="13" height="9" viewBox="0 0 13 9"><path d="M0.6 4.5C2.2 1.8 4.2 0.6 6.5 0.6s4.3 1.2 5.9 3.9c-1.6 2.7-3.6 3.9-5.9 3.9S2.2 7.2 0.6 4.5z" fill="none" stroke="#e0e0e0" stroke-width="1.1"/><circle cx="6.5" cy="4.5" r="1.5" fill="#e0e0e0"/></svg>
<svg style="left:987.5px;top:526.5px" width="9" height="11" viewBox="0 0 9 11"><path d="M4.5 0.6C6.5 3.3 8.3 5.3 8.3 7.1a3.8 3.8 0 0 1-7.6 0C0.7 5.3 2.5 3.3 4.5 0.6z" fill="none" stroke="#e0e0e0" stroke-width="1.1"/></svg>
<div class="t" style="left:792.11px;top:554.67px;font-size:40.00px;font-weight:normal;color:#ababab;font-family:'Liberation Sans',sans-serif;;transform:scale(0.1885);transform-origin:0 0;">不透明度</div>
<div class="t" style="left:887.41px;top:554.61px;font-size:40.00px;font-weight:normal;color:#ababab;font-family:'Liberation Sans',sans-serif;;transform:scale(0.1868);transform-origin:0 0;">角の半径</div>
<div class="a" style="left:791.2px;top:567.3px;width:88.8px;height:19.9px;background:#383838;border-radius:5px"></div>
<div class="a" style="left:887.5px;top:567.3px;width:88.1px;height:19.9px;background:#383838;border-radius:5px"></div>
<svg style="left:796.7px;top:572px" width="10.3" height="10.3" viewBox="0 0 10.3 10.3"><rect x="0.6" y="0.6" width="9.1" height="9.1" rx="1.5" fill="none" stroke="#c8c8c8" stroke-width="1"/><path d="M2.5 7.8h5.3V2.5" fill="none" stroke="#8a8a8a" stroke-width="0.8"/></svg>
<div class="t" style="left:811.15px;top:571.78px;font-size:9.80px;font-weight:normal;color:#e8e8e8;font-family:'Liberation Sans',sans-serif;">100%</div>
<svg style="left:893.2px;top:573px" width="7" height="8" viewBox="0 0 7 8"><path d="M0.6 8V3.5A2.9 2.9 0 0 1 3.5 0.6H7" fill="none" stroke="#c8c8c8" stroke-width="1.1"/></svg>
<div class="t" style="left:907.27px;top:571.78px;font-size:9.80px;font-weight:normal;color:#e8e8e8;font-family:'Liberation Sans',sans-serif;">0</div>
<svg style="left:986.5px;top:571.5px" width="11" height="11" viewBox="0 0 11 11"><path d="M0.6 3.5V0.6h2.9M7.5 0.6h2.9v2.9M10.4 7.5v2.9H7.5M3.5 10.4H0.6V7.5" fill="none" stroke="#e0e0e0" stroke-width="1.1"/></svg>
<div class="t" style="left:791.70px;top:612.34px;font-size:40.00px;font-weight:bold;color:#eeeeee;font-family:'Liberation Sans',sans-serif;;transform:scale(0.2408);transform-origin:0 0;">塗り</div>
<svg style="left:964px;top:612.5px" width="10.5" height="10.5" viewBox="0 0 10.5 10.5"><g fill="none" stroke="#e0e0e0" stroke-width="1.05"><circle cx="2.4" cy="2.4" r="1.8"/><circle cx="8.1" cy="2.4" r="1.8"/><circle cx="2.4" cy="8.1" r="1.8"/><circle cx="8.1" cy="8.1" r="1.8"/></g></svg>
<svg style="left:986.5px;top:612px" width="11" height="11" viewBox="0 0 11 11"><path d="M5.5 0v11M0 5.5h11" stroke="#e0e0e0" stroke-width="1.2"/></svg>
<div class="a" style="left:962.2px;top:584.5px;width:25px;height:25px;border-radius:50%;background:#1e1e1e;box-shadow:0 1px 3px rgba(0,0,0,0.4)"></div>
<div class="t" style="left:971.65px;top:589.94px;font-size:16.64px;font-weight:normal;color:#d8d8d8;font-family:'Liberation Sans',sans-serif;">?</div>
</body></html>
